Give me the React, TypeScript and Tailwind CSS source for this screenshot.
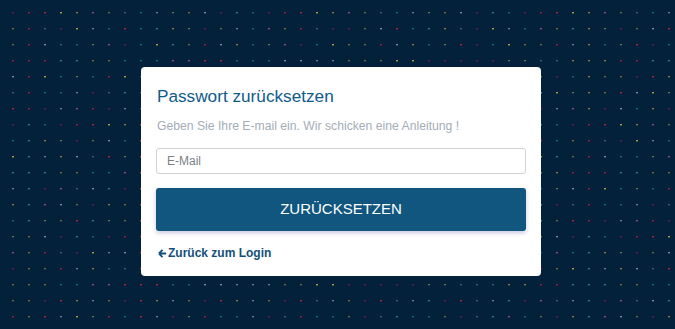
const palette = [
  '#7a1848', '#5f7f96', '#a8283c', '#7d6a2a', '#8a7b34', '#6c1a46', '#6d6a2c', '#1a5f86',
  '#136a8a', '#9a2044', '#5e7a4a', '#b89a30', '#7a8aa0', '#a04a6a', '#2c7c8a', '#4a5a6a',
];

const Dots = () => {
  const cols = 43;
  const rows = 21;
  const items = [];
  for (let r = 0; r < rows; r++) {
    for (let c = 0; c < cols; c++) {
      const seed = (r * 131 + c * 57 + ((r * c) % 7) * 13) % palette.length;
      items.push(
        <rect key={`${r}-${c}`} x={12 + c * 16} y={12 + r * 16} width={2} height={1.4} fill={palette[seed]} />
      );
    }
  }
  return (
    <svg className="absolute inset-0" width={675} height={329}>
      {items}
    </svg>
  );
};

export default function App() {
  return (
    <div className="relative w-[675px] h-[329px] overflow-hidden bg-[#03213a] font-['Liberation_Sans',Arial,sans-serif]">
      <Dots />
      <div className="relative pt-[67px] pl-[141px]">
        <div className="w-[400px] h-[209px] bg-white rounded-[4px] px-[15px] pt-[17px]">
          <h1 className="text-[17.2px] leading-[24px] text-[#0e5a8a] pl-[1px]">Passwort zurücksetzen</h1>
          <p className="mt-[10px] text-[12.2px] leading-[16px] text-[#a3adb7] pl-[1px]">
            Geben Sie Ihre E-mail ein. Wir schicken eine Anleitung !
          </p>
          <input
            type="text"
            placeholder="E-Mail"
            className="mt-[14px] block w-full h-[26px] border border-[#cfd3d8] rounded-[3px] px-[10px] text-[12px] text-[#555] placeholder:text-[#7b7f85] outline-none"
          />
          <button className="mt-[14px] w-full h-[43px] rounded-[3px] bg-[#10567e] text-white text-[15px] shadow-[0_2px_4px_rgba(40,40,120,0.25)]">
            ZURÜCKSETZEN
          </button>
          <a className="mt-[13px] flex items-center gap-[1px] pl-[2px] text-[12px] font-bold text-[#134f7a]">
            <svg width="9" height="9" viewBox="0 0 10 10">
              <path d="M1 5 L5 1 M1 5 L5 9 M1 5 H9" stroke="#134f7a" strokeWidth="2" fill="none" />
            </svg>
            Zurück zum Login
          </a>
        </div>
      </div>
    </div>
  );
}
